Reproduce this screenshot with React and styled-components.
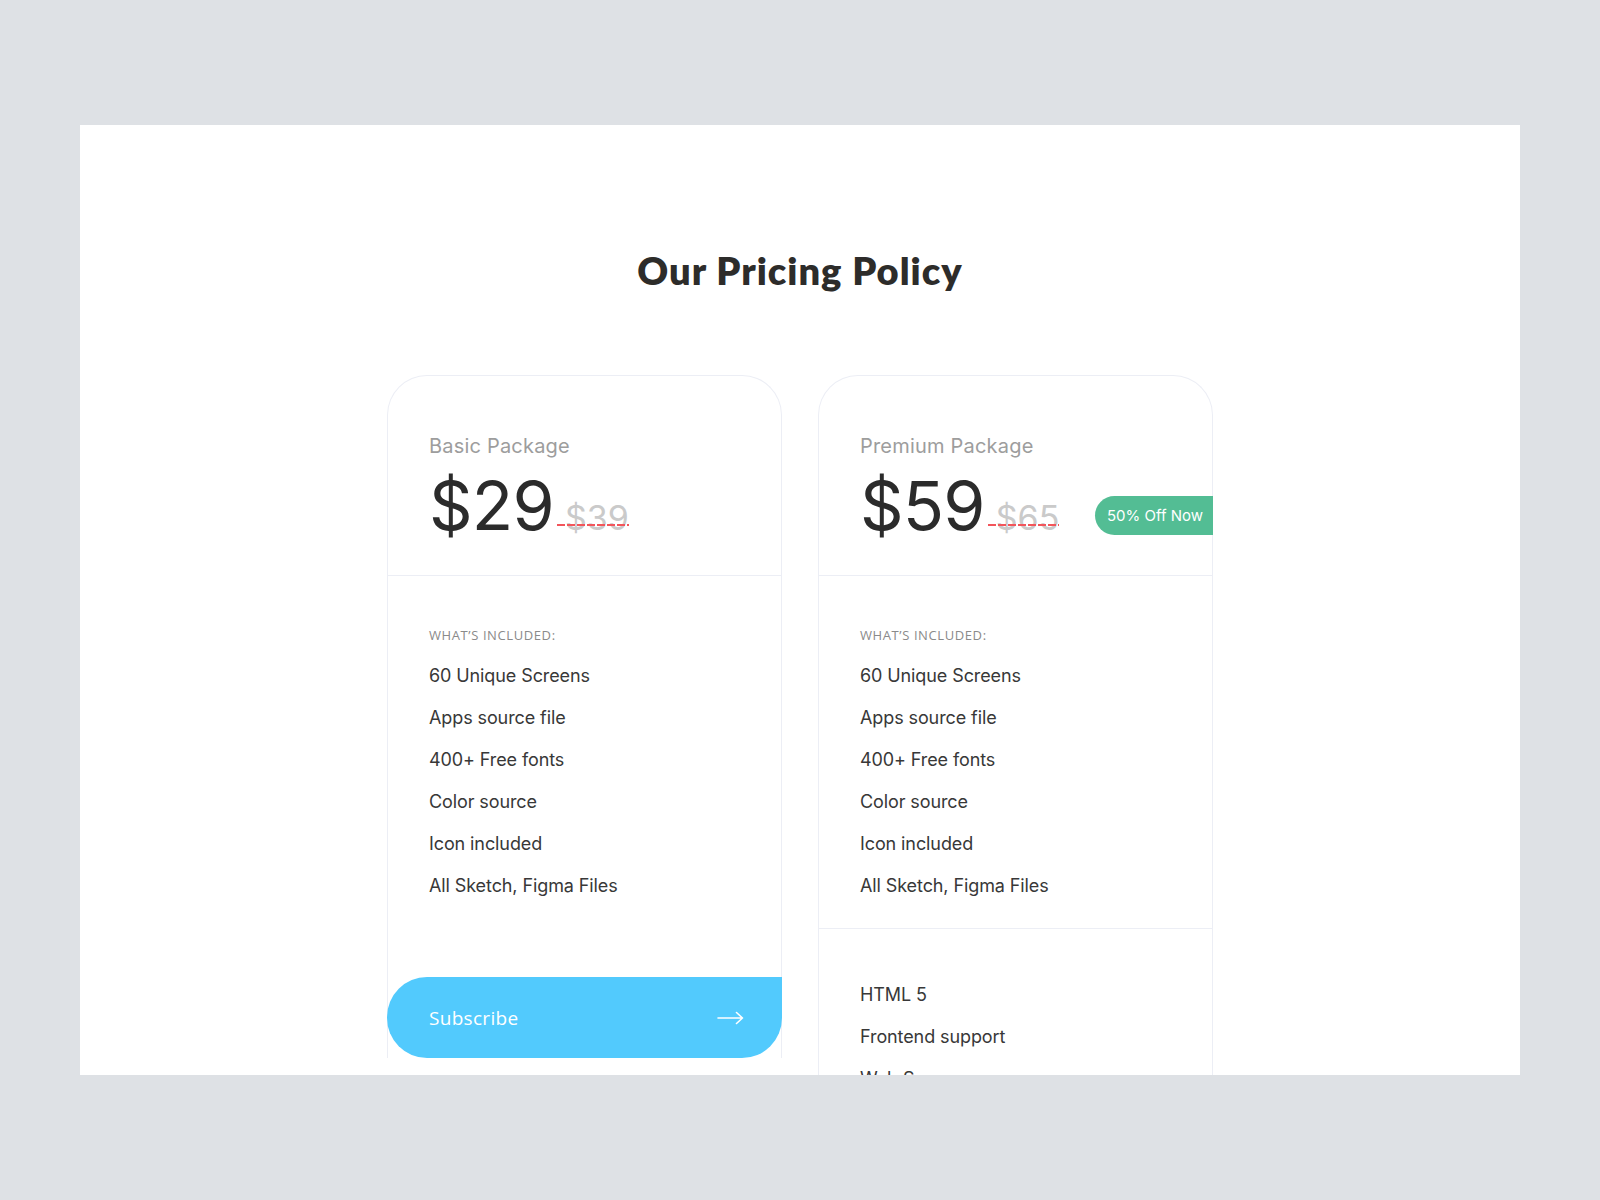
import React from "react";
import styled, { createGlobalStyle } from "styled-components";

const Global = createGlobalStyle`
  html, body { margin: 0; padding: 0; background: #dee1e5; }
  body { font-family: "Inter", "Liberation Sans", sans-serif; }
  * { box-sizing: border-box; }
`;

const Page = styled.div`
  min-height: 1200px;
  padding: 125px 80px;
`;

const Panel = styled.section`
  width: 1440px;
  height: 950px;
  background: #ffffff;
  overflow: hidden;
  padding-top: 123px;
  display: flex;
  flex-direction: column;
  align-items: center;
`;

const Title = styled.h1`
  margin: 0;
  font-family: "Lato", "Liberation Sans", sans-serif;
  font-weight: 800;
  font-size: 38px;
  line-height: 44px;
  color: #2d2c2a;
  letter-spacing: 1px;
`;

const Cards = styled.div`
  margin-top: 83px;
  display: flex;
  align-items: flex-start;
  gap: 36px;
`;

const Card = styled.article`
  width: 395px;
  border: 1px solid #eceef5;
  border-bottom: none;
  border-radius: 40px 40px 0 0;
  background: #fff;
  display: flex;
  flex-direction: column;
`;

const Header = styled.div`
  padding: 58px 41px 36px;
  border-bottom: 1px solid #eceef5;
`;

const PackageName = styled.div`
  font-size: 20px;
  line-height: 24px;
  color: #9d9d9d;
  letter-spacing: 0.2px;
`;

const PriceRow = styled.div`
  margin-top: 13px;
  display: flex;
  align-items: baseline;
`;

const Price = styled.span`
  font-size: 68px;
  line-height: 68px;
  color: #2b2b2b;
  letter-spacing: -0.8px;
`;

const OldPrice = styled.span`
  position: relative;
  margin-left: 3px;
  padding-left: 8px;
  font-size: 34px;
  line-height: 36px;
  color: #cacaca;
  &::after {
    content: "";
    position: absolute;
    left: 0;
    right: 0;
    bottom: 10px;
    height: 2px;
    background-image: linear-gradient(to right, #f2555b 0 8px, transparent 8px 10px);
    background-size: 10px 2px;
  }
`;

const Badge = styled.span`
  align-self: flex-end;
  margin: 0 -42px 4px auto;
  height: 39px;
  padding: 0 10px 0 12px;
  display: flex;
  align-items: center;
  background: #53bd94;
  color: #fff;
  font-size: 15px;
  border-radius: 20px 0 0 20px;
  white-space: nowrap;
`;

const Section = styled.div`
  padding: ${(p) => p.$top}px 41px ${(p) => p.$bottom}px;
  border-bottom: ${(p) => (p.$divider ? "1px solid #eceef5" : "none")};
`;

const Included = styled.div`
  font-family: "Open Sans", "Liberation Sans", sans-serif;
  font-size: 13px;
  line-height: 16px;
  color: #8a8a8a;
  letter-spacing: 0.6px;
  text-transform: uppercase;
  margin-bottom: 21px;
`;

const List = styled.ul`
  list-style: none;
  margin: 0;
  padding: 0;
  display: flex;
  flex-direction: column;
  gap: 18px;
`;

const Item = styled.li`
  font-size: 18px;
  line-height: 24px;
  color: #383838;
  letter-spacing: -0.1px;
`;

const Subscribe = styled.button`
  margin: 0 -1px;
  width: 395px;
  height: 81px;
  border: none;
  border-radius: 40px 0 40px 40px;
  background: #52cafd;
  color: #fff;
  padding: 0 38px 0 42px;
  display: flex;
  align-items: center;
  justify-content: space-between;
  font-family: "Open Sans", "Liberation Sans", sans-serif;
  font-size: 19px;
  letter-spacing: 0.3px;
  cursor: pointer;
`;

const features = [
  "60 Unique Screens",
  "Apps source file",
  "400+ Free fonts",
  "Color source",
  "Icon included",
  "All Sketch, Figma Files",
];

const extras = ["HTML 5", "Frontend support", "Web Source"];

const Arrow = () => (
  <svg width="27" height="14" viewBox="0 0 27 14" fill="none">
    <path d="M1 7H25.5M19.5 1.5L25.5 7L19.5 12.5" stroke="#fff" strokeWidth="1.6" strokeLinecap="round" strokeLinejoin="round" />
  </svg>
);

const Features = ({ top, bottom, divider }) => (
  <Section $top={top} $bottom={bottom} $divider={divider}>
    <Included>What’s included:</Included>
    <List>
      {features.map((f) => (
        <Item key={f}>{f}</Item>
      ))}
    </List>
  </Section>
);

export default function App() {
  return (
    <>
      <Global />
      <Page>
        <Panel>
          <Title>Our Pricing Policy</Title>
          <Cards>
            <Card>
              <Header>
                <PackageName>Basic Package</PackageName>
                <PriceRow>
                  <Price>$29</Price>
                  <OldPrice>$39</OldPrice>
                </PriceRow>
              </Header>
              <Features top={51} bottom={79} />
              <Subscribe>
                <span>Subscribe</span>
                <Arrow />
              </Subscribe>
            </Card>
            <Card>
              <Header>
                <PackageName>Premium Package</PackageName>
                <PriceRow>
                  <Price>$59</Price>
                  <OldPrice>$65</OldPrice>
                  <Badge>50% Off Now</Badge>
                </PriceRow>
              </Header>
              <Features top={51} bottom={30} divider />
              <Section $top={54} $bottom={40}>
                <List>
                  {extras.map((f) => (
                    <Item key={f}>{f}</Item>
                  ))}
                </List>
              </Section>
            </Card>
          </Cards>
        </Panel>
      </Page>
    </>
  );
}
